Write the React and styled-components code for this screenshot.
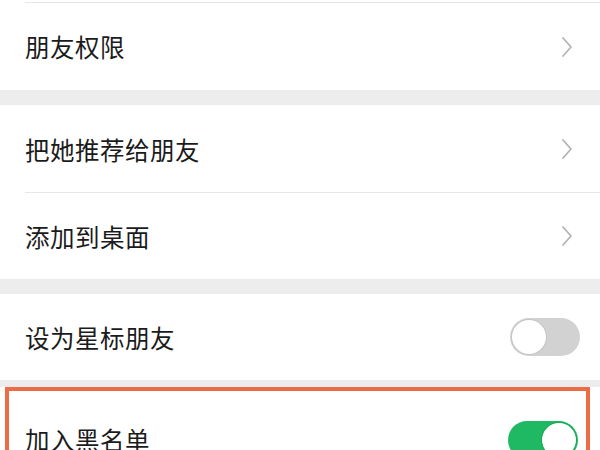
import React from 'react'
import styled, { createGlobalStyle } from 'styled-components'

const GlobalStyle = createGlobalStyle`
  html, body {
    margin: 0;
    padding: 0;
    background: #ffffff;
  }
  body {
    font-family: "Noto Sans CJK SC", "Noto Sans", sans-serif;
    width: 600px;
    height: 450px;
    overflow: hidden;
  }
`

const Page = styled.div`
  width: 600px;
  padding-top: 2px;
  background: #ffffff;
`

const TopLine = styled.div`
  height: 1px;
  margin-left: 25px;
  background: #e6e6e6;
`

const Group = styled.div`
  background: #ffffff;
`

const Gap = styled.div`
  height: ${props => props.h || 15}px;
  background: #ededed;
`

const Row = styled.div`
  display: flex;
  align-items: center;
  justify-content: space-between;
  height: ${props => props.h || 87}px;
  padding: 0 ${props => props.pr || 27}px 0 ${props => props.pl || 25}px;
  box-sizing: border-box;
  position: relative;
  &::after {
    content: '';
    display: ${props => (props.divider ? 'block' : 'none')};
    position: absolute;
    left: 25px;
    right: 0;
    bottom: 0;
    height: 1px;
    background: #e6e6e6;
  }
`

const Label = styled.span`
  font-size: 24.5px;
  color: #1b1b1b;
  letter-spacing: 0.5px;
`

const Chevron = () => (
  <svg width="12" height="22" viewBox="0 0 12 22">
    <path d="M2 2 L10 11 L2 20" fill="none" stroke="#b4b4b4" strokeWidth="1.8" strokeLinecap="round" strokeLinejoin="round" />
  </svg>
)

const Track = styled.div`
  width: 70px;
  height: 38px;
  border-radius: 19px;
  background: ${props => (props.on ? '#1fb863' : '#d2d2d2')};
  display: flex;
  align-items: center;
  justify-content: ${props => (props.on ? 'flex-end' : 'flex-start')};
  padding: 2px;
  box-sizing: border-box;
`

const Knob = styled.div`
  width: 34px;
  height: 34px;
  border-radius: 50%;
  background: #ffffff;
  box-shadow: 0 0 0 1px ${props => (props.on ? '#17a955' : '#c4c4c4')};
`

const Toggle = ({ on }) => (
  <Track on={on}>
    <Knob on={on} />
  </Track>
)

const HighlightWrap = styled.div`
  background: #ffffff;
  padding: 0 10px 0 5px;
`

const Highlight = styled.div`
  border: 4px solid #ec6c45;
  padding-top: 5px;
`

const App = () => {
  return (
    <>
      <GlobalStyle />
      <Page>
        <TopLine />
        <Group>
          <Row>
            <Label>朋友权限</Label>
            <Chevron />
          </Row>
        </Group>
        <Gap h={15} />
        <Group>
          <Row divider h={88}>
            <Label>把她推荐给朋友</Label>
            <Chevron />
          </Row>
          <Row h={86}>
            <Label>添加到桌面</Label>
            <Chevron />
          </Row>
        </Group>
        <Gap h={15} />
        <Group>
          <Row h={86} pr={20}>
            <Label>设为星标朋友</Label>
            <Toggle />
          </Row>
        </Group>
        <Gap h={7} />
        <HighlightWrap>
          <Highlight>
            <Row h={87} pl={16} pr={8}>
              <Label>加入黑名单</Label>
              <Toggle on />
            </Row>
          </Highlight>
        </HighlightWrap>
      </Page>
    </>
  )
}

export default App
